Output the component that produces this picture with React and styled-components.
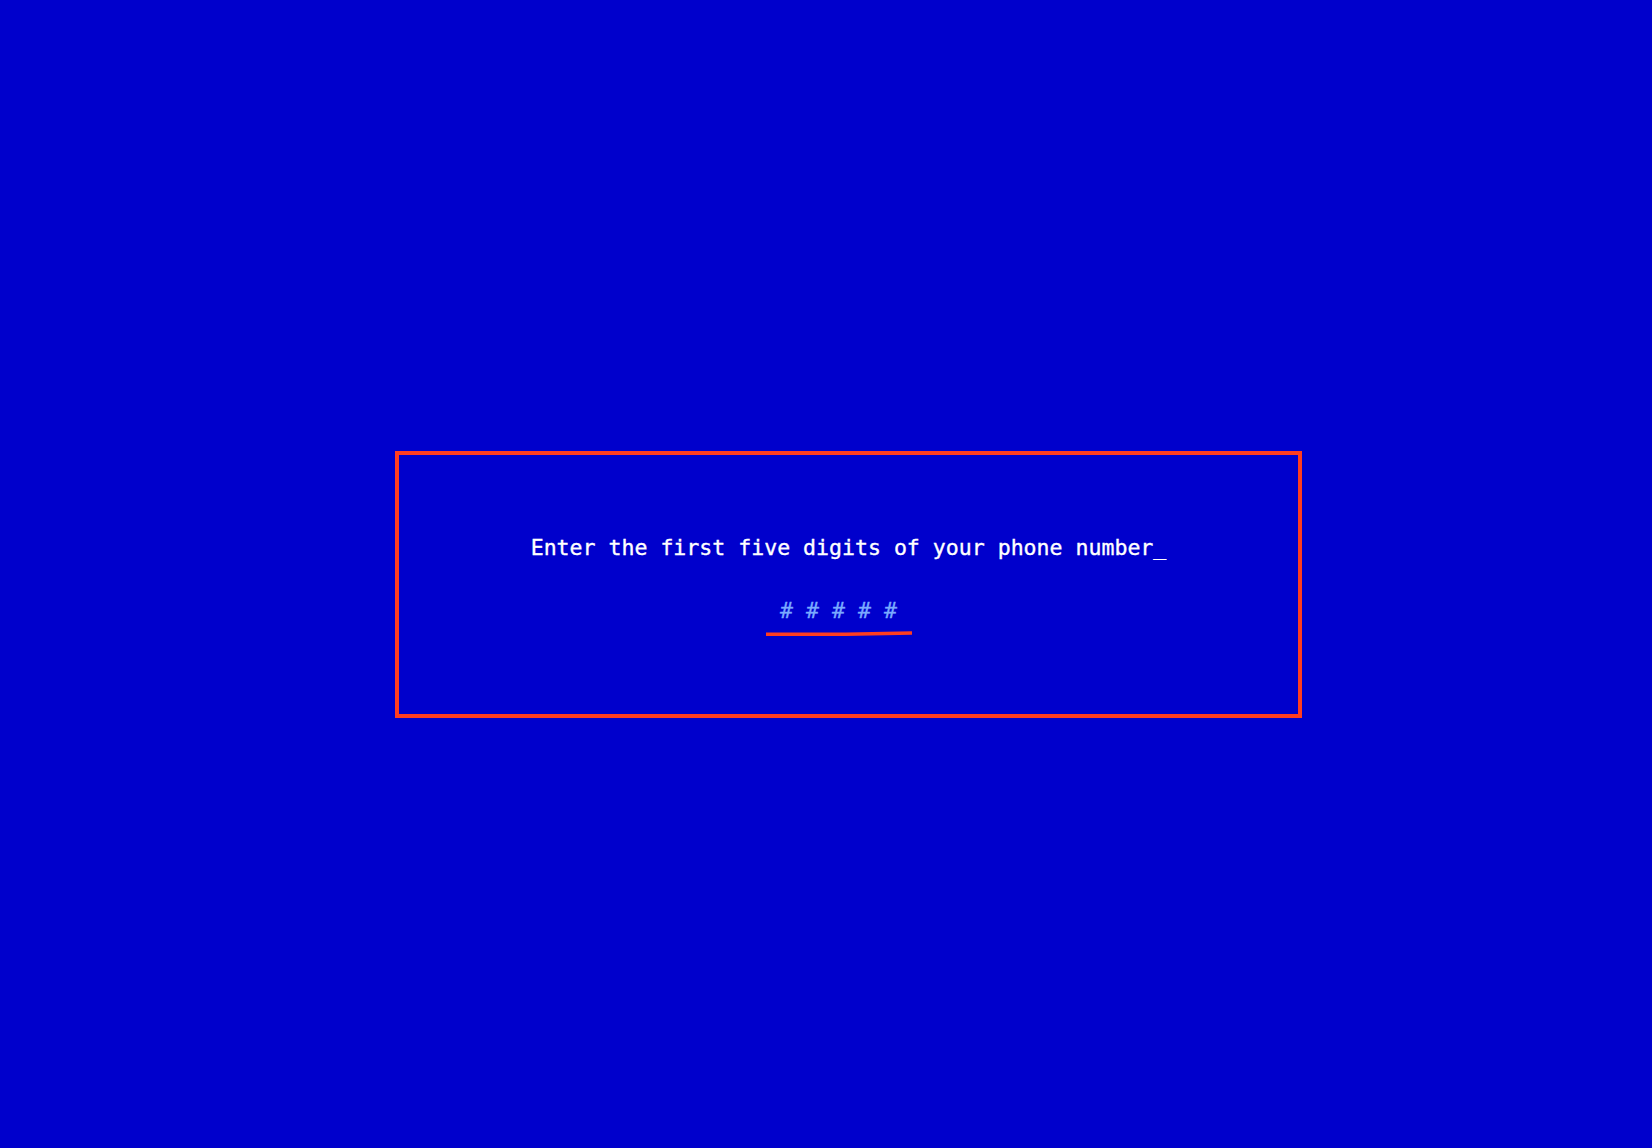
import React from "react";
import styled, { createGlobalStyle } from "styled-components";

const Global = createGlobalStyle`
  html, body { margin: 0; padding: 0; background: #0000cc; }
  body { font-family: "DejaVu Sans Mono", "Liberation Mono", monospace; }
`;

const Page = styled.main`
  box-sizing: border-box;
  min-height: 100vh;
  display: flex;
  align-items: center;
  justify-content: center;
  padding: 20px 0 0 45px;
  background: #0000cc;
`;

const Panel = styled.section`
  box-sizing: border-box;
  width: 907px;
  height: 267px;
  border: 4px solid #ff3d1f;
  display: flex;
  flex-direction: column;
  align-items: center;
  justify-content: center;
`;

const Prompt = styled.h1`
  margin: 2px 0 0;
  font-family: "DejaVu Sans Mono", "Liberation Mono", monospace;
  font-size: 21.55px;
  font-weight: 400;
  line-height: 26px;
  color: #ffffff;
  white-space: pre;
  -webkit-text-stroke: 0.35px #ffffff;
`;

const Field = styled.div`
  margin-top: 37px;
  margin-right: 20px;
  display: flex;
  flex-direction: column;
  align-items: center;
  width: 146px;
`;

const Digits = styled.span`
  font-family: "DejaVu Sans Mono", "Liberation Mono", monospace;
  font-size: 21.55px;
  line-height: 26px;
  color: #7aaaff;
  white-space: pre;
  -webkit-text-stroke: 0.3px #7aaaff;
`;

const Stroke = styled.svg`
  display: block;
  margin-top: 7px;
  width: 146px;
  height: 5px;
`;

export default function App() {
  return (
    <>
      <Global />
      <Page>
        <Panel>
          <Prompt>Enter the first five digits of your phone number_</Prompt>
          <Field>
            <Digits># # # # #</Digits>
            <Stroke viewBox="0 0 146 5" aria-hidden="true">
              <path d="M0 3.3 L80 3.2 L146 2" stroke="#ff3d1f" strokeWidth="3.4" fill="none" />
            </Stroke>
          </Field>
        </Panel>
      </Page>
    </>
  );
}
